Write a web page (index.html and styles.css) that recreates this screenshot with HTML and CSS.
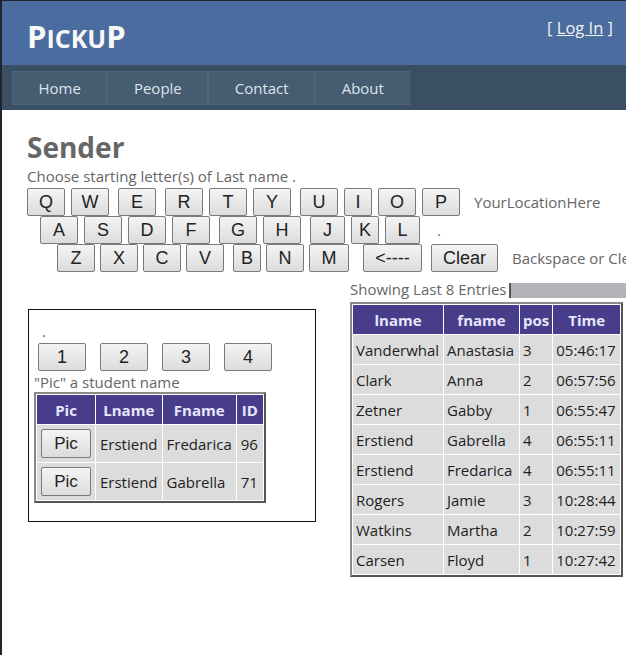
FILE: index.html
```html
<!DOCTYPE html>
<html lang="en">
<head>
<meta charset="utf-8">
<title>Pickup</title>
<link rel="stylesheet" href="styles.css">
</head>
<body>
<div class="page">
  <header class="header">
    <div class="title">P<span class="sc">ICKU</span>P</div>
    <div class="login">[ <a href="#">Log In</a> ]</div>
  </header>
  <nav class="menubar">
    <ul class="menu">
      <li><a href="#">Home</a></li>
      <li><a href="#">People</a></li>
      <li><a href="#">Contact</a></li>
      <li><a href="#">About</a></li>
    </ul>
  </nav>
  <main class="main">
    <h1 class="heading">Sender</h1>
    <p class="hint">Choose starting letter(s) of Last name .</p>
    <div class="keys">
      <div class="krow r1">
        <button class="key">Q</button><button class="key">W</button><button class="key sp">E</button><button class="key sp">R</button><button class="key">T</button><button class="key">Y</button><button class="key sp">U</button><button class="key w-xs">I</button><button class="key">O</button><button class="key">P</button>
        <span class="klabel">YourLocationHere</span>
      </div>
      <div class="krow r2">
        <button class="key">A</button><button class="key">S</button><button class="key">D</button><button class="key">F</button><button class="key sp">G</button><button class="key">H</button><button class="key sp w-sm">J</button><button class="key w-xs">K</button><button class="key w-sm">L</button>
        <span class="klabel dot">.</span>
      </div>
      <div class="krow r3">
        <button class="key">Z</button><button class="key">X</button><button class="key">C</button><button class="key">V</button><button class="key sp w-xs">B</button><button class="key">N</button><button class="key w-md">M</button><button class="key back">&lt;----</button><button class="key clear">Clear</button>
        <span class="klabel">Backspace or Clear</span>
      </div>
    </div>

    <div class="lower">
      <section class="picker">
        <div class="pdot">.</div>
        <div class="posrow">
          <button class="pos">1</button><button class="pos">2</button><button class="pos">3</button><button class="pos">4</button>
        </div>
        <div class="pcap">"Pic" a student name</div>
        <table class="grid students">
          <thead>
            <tr><th class="c-pic">Pic</th><th class="c-ln">Lname</th><th class="c-fn">Fname</th><th class="c-id">ID</th></tr>
          </thead>
          <tbody>
            <tr><td><button class="picbtn">Pic</button></td><td>Erstiend</td><td>Fredarica</td><td>96</td></tr>
            <tr><td><button class="picbtn">Pic</button></td><td>Erstiend</td><td>Gabrella</td><td>71</td></tr>
          </tbody>
        </table>
      </section>

      <section class="entries">
        <div class="ecap">Showing Last 8 Entries<span class="ebar"></span></div>
        <table class="grid log">
          <thead>
            <tr><th class="c-lname">lname</th><th class="c-fname">fname</th><th class="c-pos">pos</th><th class="c-time">Time</th></tr>
          </thead>
          <tbody>
            <tr><td>Vanderwhal</td><td>Anastasia</td><td>3</td><td>05:46:17</td></tr>
            <tr><td>Clark</td><td>Anna</td><td>2</td><td>06:57:56</td></tr>
            <tr><td>Zetner</td><td>Gabby</td><td>1</td><td>06:55:47</td></tr>
            <tr><td>Erstiend</td><td>Gabrella</td><td>4</td><td>06:55:11</td></tr>
            <tr><td>Erstiend</td><td>Fredarica</td><td>4</td><td>06:55:11</td></tr>
            <tr><td>Rogers</td><td>Jamie</td><td>3</td><td>10:28:44</td></tr>
            <tr><td>Watkins</td><td>Martha</td><td>2</td><td>10:27:59</td></tr>
            <tr><td>Carsen</td><td>Floyd</td><td>1</td><td>10:27:42</td></tr>
          </tbody>
        </table>
      </section>
    </div>
  </main>
</div>
</body>
</html>
```
FILE: styles.css
```css
html, body {
  margin: 0;
  padding: 0;
  background: #ffffff;
  overflow: hidden;
}

body {
  font-family: "Open Sans", "Noto Sans", sans-serif;
  font-size: 15px;
  color: #666666;
}

.page {
  min-height: 655px;
  box-sizing: border-box;
  border-left: 2px solid #1f252c;
  border-top: 1px solid #1f252c;
  background: #ffffff;
}

/* header */
.header {
  height: 64px;
  box-sizing: border-box;
  background: #4b6c9e;
  display: flex;
  justify-content: space-between;
  align-items: flex-start;
  padding: 0 13px 0 25px;
}

.title {
  margin-top: 17px;
  font-size: 31px;
  line-height: 36px;
  font-weight: 700;
  color: #f9f9f9;
}

.title .sc {
  font-size: 25px;
}

.login {
  margin-top: 17px;
  font-size: 16.5px;
  line-height: 20px;
  color: #f2f2f2;
  white-space: nowrap;
}

.login a {
  color: #f2f2f2;
  text-decoration: underline;
}

/* menu */
.menubar {
  background: #3a4f63;
  padding: 6px 0 5px 10px;
}

.menu {
  list-style: none;
  margin: 0;
  padding: 0;
  display: flex;
}

.menu a {
  display: block;
  background: #465c71;
  border: 1px solid #4e667d;
  color: #dde4ec;
  text-decoration: none;
  font-size: 15px;
  line-height: 21px;
  padding: 6px 25.5px 5px 25.5px;
  white-space: nowrap;
}

/* main */
.main {
  padding: 0 0 0 25px;
}

.heading {
  margin: 21px 0 0 0;
  font-size: 28px;
  line-height: 32px;
  font-weight: 700;
  color: #666666;
}

.hint {
  margin: 4px 0 0 0;
  line-height: 18px;
  color: #666666;
}

.keys {
  margin-top: 3px;
}

.krow {
  display: flex;
  align-items: center;
  height: 28px;
}

.r2 { padding-left: 13px; }
.r3 { padding-left: 30px; }

.key {
  flex: none;
  font-family: "Liberation Sans", Arial, sans-serif;
  font-size: 18px;
  color: #222222;
  width: 38px;
  height: 28px;
  padding: 0;
  box-sizing: border-box;
  background: linear-gradient(#f4f4f4, #dcdcdc);
  border: 1px solid #7a7a7a;
  border-radius: 2px;
  text-align: center;
}

.key + .key { margin-left: 6px; }
.r3 .key + .key { margin-left: 5px; }
.key.sp, .r3 .key.sp { margin-left: 9px; }

.key.w-xs { width: 28px; }
.key.w-sm { width: 35px; }
.key.w-md { width: 40px; }
.r3 .key.back { width: 59px; margin-left: 14px; }
.r3 .key.clear { width: 67px; margin-left: 9px; }

.klabel {
  flex: none;
  margin-left: 14px;
  line-height: 18px;
  color: #666666;
  white-space: nowrap;
}

.klabel.dot {
  margin-left: 17px;
}

/* lower area */
.lower {
  display: flex;
  align-items: flex-start;
  margin-top: 9px;
  margin-left: 1px;
}

.picker {
  flex: none;
  margin-top: 28px;
  width: 288px;
  box-sizing: border-box;
  border: 1px solid #111111;
  padding: 12px 0 18px 5px;
}

.pdot {
  line-height: 18px;
  padding-left: 8px;
}

.posrow {
  display: flex;
  margin: 3px 0 0 4px;
}

.pos {
  flex: none;
  font-family: "Liberation Sans", Arial, sans-serif;
  font-size: 18px;
  color: #222222;
  width: 48px;
  height: 28px;
  padding: 0;
  background: linear-gradient(#f4f4f4, #dcdcdc);
  border: 1px solid #7a7a7a;
  border-radius: 2px;
}

.pos + .pos { margin-left: 14px; }

.pcap {
  margin-top: 2px;
  line-height: 18px;
}

/* grids */
.grid {
  border-collapse: separate;
  border-spacing: 1px;
  border: 2px solid;
  border-color: #8a8a8a #555555 #555555 #8a8a8a;
  background: #ffffff;
  font-size: 15px;
  color: #1e1e1e;
}

.grid th {
  background: #483d8b;
  color: #e6e6fa;
  font-weight: 700;
  text-align: center;
  height: 29px;
  padding: 0 3px;
  box-sizing: border-box;
}

.grid td {
  background: #dcdcdc;
  padding: 0 4px;
  white-space: nowrap;
}

.students {
  margin-top: 1px;
  table-layout: fixed;
}

.students td {
  height: 37px;
  box-sizing: border-box;
}

.students .c-pic { width: 58px; }
.students .c-ln { width: 65px; }
.students .c-fn { width: 72px; }
.students .c-id { width: 26px; }

.picbtn {
  font-family: "Liberation Sans", Arial, sans-serif;
  font-size: 17px;
  color: #222222;
  width: 50px;
  height: 29px;
  padding: 0;
  background: linear-gradient(#f4f4f4, #dcdcdc);
  border: 1px solid #7a7a7a;
  border-radius: 2px;
  display: block;
}

.entries {
  flex: none;
  width: 280px;
  margin-left: 34px;
}

.ecap {
  display: flex;
  align-items: flex-start;
  line-height: 16px;
  white-space: nowrap;
}

.ebar {
  display: block;
  flex: none;
  margin: 2px 0 0 2px;
  width: 140px;
  height: 15px;
  background: #b2b2b9;
  border-left: 2px solid #555555;
}

.log {
  margin-top: 4px;
  table-layout: fixed;
}

.log td {
  height: 29px;
  box-sizing: border-box;
  padding: 0 3px;
}

.log .c-lname { width: 90px; }
.log .c-fname { width: 75px; }
.log .c-pos { width: 32px; }
.log .c-time { width: 67px; }
```
